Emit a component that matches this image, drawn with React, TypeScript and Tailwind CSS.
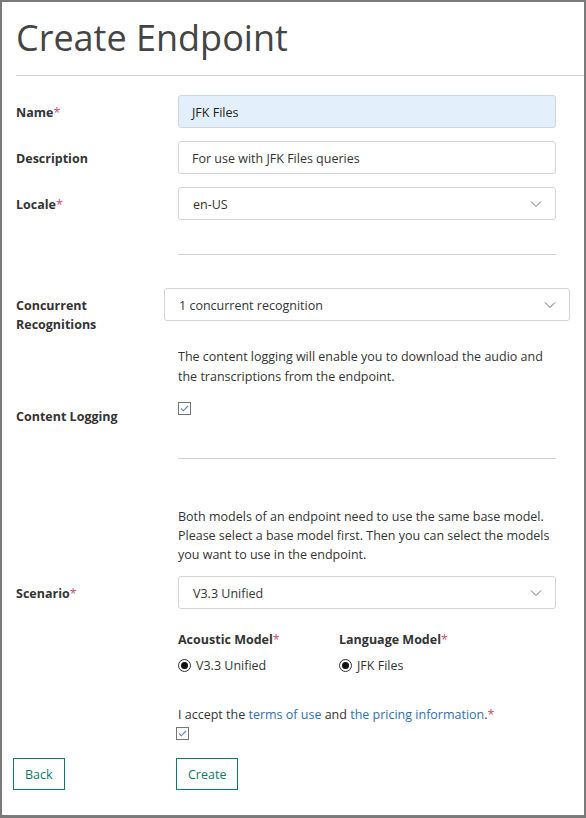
import React from "react";

const FONT = { fontFamily: '"Open Sans", "Noto Sans", Arial, sans-serif' };

function Star() {
  return <span className="text-[#c8506e] font-normal">*</span>;
}

function Chevron() {
  return (
    <svg width="12" height="8" viewBox="0 0 12 8" className="shrink-0">
      <polyline points="1,1.5 6,6.5 11,1.5" fill="none" stroke="#6b6b6b" strokeWidth="1" />
    </svg>
  );
}

function Checkbox({ className = "" }: { className?: string }) {
  return (
    <span className={"inline-flex w-[13px] h-[13px] border border-[#767676] bg-white items-center justify-center " + className}>
      <svg width="11" height="11" viewBox="0 0 11 11">
        <polyline points="2,5.5 4.3,7.8 9,3" fill="none" stroke="#5f86b5" strokeWidth="1.1" />
      </svg>
    </span>
  );
}

function Radio({ label }: { label: string }) {
  return (
    <div className="flex items-center gap-[5px] text-[12.5px] leading-[18px] text-[#333]">
      <span className="w-[13px] h-[13px] rounded-full border border-[#333] flex items-center justify-center">
        <span className="w-[7px] h-[7px] rounded-full bg-[#111]" />
      </span>
      <span className="pt-[2px]">{label}</span>
    </div>
  );
}

function Select({ value, className = "" }: { value: string; className?: string }) {
  return (
    <div className={"h-[33px] flex items-center justify-between border border-[#d4d4d4] rounded-[3px] bg-white pl-[14px] pr-[13px] text-[12.5px] text-[#333] " + className}>
      <span className="pt-[4px]">{value}</span>
      <Chevron />
    </div>
  );
}

function Label({ children, className = "" }: { children: React.ReactNode; className?: string }) {
  return <div className={"w-[162px] shrink-0 font-bold text-[12.5px] text-[#333] " + className}>{children}</div>;
}

export default function App() {
  return (
    <div style={FONT} className="w-[586px] h-[818px] bg-white border-2 border-b-[3px] border-[#7a7a7a] overflow-hidden">
      <div className="ml-[14px] h-[74px] border-b border-[#d0d0d0] flex items-center">
        <h1 className="text-[36px] text-[#444] font-normal leading-none -mt-[2px]">Create Endpoint</h1>
      </div>

      <div className="pl-[14px] pr-[28px]">
        <div className="mt-[19px] flex items-center">
          <Label className="pt-[4px]">
            Name<Star />
          </Label>
          <div className="flex-1 h-[33px] flex items-center border border-[#cfd6dd] rounded-[3px] bg-[#e3effa] px-[13px] pt-[4px] text-[12.5px] text-[#222]">
            JFK Files
          </div>
        </div>

        <div className="mt-[13px] flex items-center">
          <Label className="pt-[4px]">Description</Label>
          <div className="flex-1 h-[33px] flex items-center border border-[#d4d4d4] rounded-[3px] bg-white px-[13px] pt-[4px] text-[12.5px] text-[#333]">
            For use with JFK Files queries
          </div>
        </div>

        <div className="mt-[13px] flex items-center">
          <Label className="pt-[4px]">
            Locale<Star />
          </Label>
          <Select value="en-US" className="flex-1" />
        </div>

        <div className="ml-[162px] mt-[34px] border-t border-[#d0d0d0]" />

        <div className="mt-[33px] flex items-start">
          <Label className="leading-[19px] mt-[8px]">
            Concurrent
            <br />
            Recognitions
          </Label>
          <Select value="1 concurrent recognition" className="flex-1 -ml-[14px] -mr-[14px]" />
        </div>

        <div className="ml-[162px] mt-[13px] text-[12.5px] leading-[20px] text-[#333]">
          The content logging will enable you to download the audio and the transcriptions from the endpoint.
        </div>

        <div className="mt-[15px] h-[24px] flex items-start">
          <Label className="mt-[5px] leading-[19px]">Content Logging</Label>
          <Checkbox />
        </div>

        <div className="ml-[162px] mt-[32px] border-t border-[#d0d0d0]" />

        <div className="ml-[162px] mt-[48px] text-[12.5px] leading-[19px] text-[#333]">
          Both models of an endpoint need to use the same base model. Please select a base model first. Then you can select the models you want to use in the endpoint.
        </div>

        <div className="mt-[12px] flex items-center">
          <Label className="pt-[4px]">
            Scenario<Star />
          </Label>
          <Select value="V3.3 Unified" className="flex-1" />
        </div>

        <div className="ml-[162px] mt-[21px] flex">
          <div className="w-[161px]">
            <div className="font-bold text-[12.5px] text-[#333] leading-[20px]">
              Acoustic Model<Star />
            </div>
            <div className="mt-[5px]">
              <Radio label="V3.3 Unified" />
            </div>
          </div>
          <div>
            <div className="font-bold text-[12.5px] text-[#333] leading-[20px]">
              Language Model<Star />
            </div>
            <div className="mt-[5px]">
              <Radio label="JFK Files" />
            </div>
          </div>
        </div>

        <div className="ml-[162px] mt-[30px] text-[12.5px] leading-[20px] text-[#333]">
          I accept the <span className="text-[#2f6fb3]">terms of use</span> and{" "}
          <span className="text-[#2f6fb3]">the pricing information</span>.<Star />
        </div>
        <div className="ml-[160px] mt-[2px] flex">
          <Checkbox />
        </div>

        <div className="mt-[18px] flex items-center">
          <div className="w-[163px] shrink-0 -ml-[3px]">
            <button className="h-[32px] px-[11px] pt-[3px] border border-[#0b7a6a] text-[12.5px] text-[#0b7a6a] bg-white">
              Back
            </button>
          </div>
          <button className="h-[32px] px-[11px] pt-[3px] border border-[#0b7a6a] text-[12.5px] text-[#0b7a6a] bg-white">
            Create
          </button>
        </div>
      </div>
    </div>
  );
}
